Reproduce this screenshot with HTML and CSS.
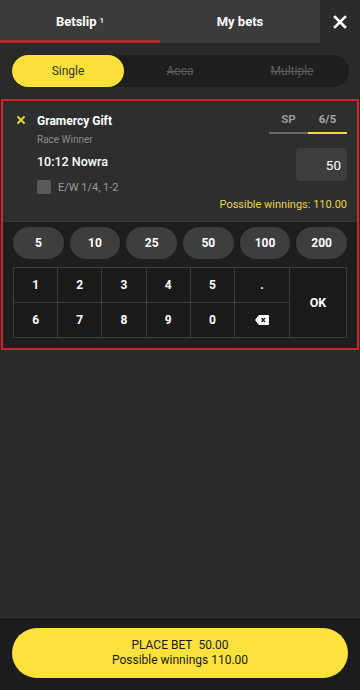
FILE: index.html
```html
<!DOCTYPE html>
<html>
<head>
<meta charset="utf-8">
<link rel="stylesheet" href="styles.css">
</head>
<body>
<div class="app">
  <div class="header">
    <div class="tab active">Betslip <sup>1</sup></div>
    <div class="tab">My bets</div>
    <div class="close">
      <svg width="14" height="14" viewBox="0 0 14 14"><path d="M2 2 L12 12 M12 2 L2 12" stroke="#fff" stroke-width="2.6" stroke-linecap="square"/></svg>
    </div>
  </div>
  <div class="seg-wrap">
    <div class="seg">
      <div class="seg-item on">Single</div>
      <div class="seg-item off">Acca</div>
      <div class="seg-item off">Multiple</div>
    </div>
  </div>
  <div class="slip">
    <div class="card">
      <div class="rem">
        <svg width="10" height="10" viewBox="0 0 10 10"><path d="M1.5 1.5 L8.5 8.5 M8.5 1.5 L1.5 8.5" stroke="#f2dc3a" stroke-width="1.8"/></svg>
      </div>
      <div class="info">
        <div class="name">Gramercy Gift</div>
        <div class="market">Race Winner</div>
        <div class="race">10:12 Nowra</div>
        <div class="ew"><span class="box"></span>E/W 1/4, 1-2</div>
      </div>
      <div class="right">
        <div class="odds">
          <div class="odd">SP</div>
          <div class="odd sel">6/5</div>
        </div>
        <div class="stake">50</div>
      </div>
      <div class="win">Possible winnings: 110.00</div>
    </div>
    <div class="pad">
      <div class="quick">
        <div class="q">5</div><div class="q">10</div><div class="q">25</div><div class="q">50</div><div class="q">100</div><div class="q">200</div>
      </div>
      <div class="keys">
        <div class="k">1</div><div class="k">2</div><div class="k">3</div><div class="k">4</div><div class="k">5</div><div class="k">.</div>
        <div class="k ok">OK</div>
        <div class="k">6</div><div class="k">7</div><div class="k">8</div><div class="k">9</div><div class="k">0</div>
        <div class="k"><svg width="14" height="10" viewBox="0 0 14 10"><path d="M4 0 H13 a1 1 0 0 1 1 1 V9 a1 1 0 0 1 -1 1 H4 L0 5 Z" fill="#fff"/><path d="M6.5 3 L10 7 M10 3 L6.5 7" stroke="#1a1a1a" stroke-width="1.3"/></svg></div>
      </div>
    </div>
  </div>
  <div class="spacer"></div>
  <div class="footer">
    <div class="place">
      <div>PLACE BET&nbsp; 50.00</div>
      <div>Possible winnings 110.00</div>
    </div>
  </div>
</div>
</body>
</html>
```
FILE: styles.css
```css
* { box-sizing: border-box; }
html, body { margin: 0; padding: 0; }
body { font-family: Roboto, "Noto Sans", sans-serif; background: #2a2a2a; color: #fff; }
.app { width: 360px; height: 690px; display: flex; flex-direction: column; background: #2a2a2a; }
.header { height: 43px; display: flex; background: #3b3b3b; }
.tab { width: 160px; display: flex; align-items: center; justify-content: center; font-size: 13px; font-weight: 700; color: #fff; border-bottom: 3px solid transparent; padding-top: 2px; }
.tab.active { border-bottom-color: #b8262f; }
.tab sup { font-size: 8px; font-weight: 500; margin-left: 3px; position: relative; top: -1px; }
.close { width: 40px; margin-left: auto; background: #2b2b2b; display: flex; align-items: center; justify-content: center; }
.seg-wrap { padding: 12px 11px 12px; }
.seg { height: 32px; background: #1e1e1e; border-radius: 16px; display: flex; padding: 0 1px; }
.seg-item { flex: 1; display: flex; align-items: center; justify-content: center; font-size: 12px; border-radius: 16px; }
.seg-item.on { background: #fbe03c; color: #333; flex: 0 0 112px; }
.seg-item.off { color: #5e5e5e; text-decoration: line-through; }
.slip { margin: 0 1px; border: 2px solid #d0212d; }
.card { background: #2e2e2e; display: grid; grid-template-columns: 34px 1fr auto; padding: 11px 10px 10px 0; }
.rem { display: flex; justify-content: center; padding-top: 3px; padding-left: 2px; }
.info { display: flex; flex-direction: column; padding-top: 2px; }
.name { font-size: 12px; font-weight: 700; color: #fff; line-height: 14px; }
.market { font-size: 10px; color: #8b8b8b; margin-top: 6px; line-height: 12px; }
.race { font-size: 12.5px; color: #fff; margin-top: 9px; line-height: 14px; font-weight: 500; }
.ew { display: flex; align-items: center; font-size: 11px; color: #9a9a9a; margin-top: 11px; }
.box { width: 14px; height: 14px; background: #5a5a5a; border-radius: 2px; margin-right: 7px; }
.right { display: flex; flex-direction: column; align-items: flex-end; }
.odds { display: flex; width: 78px; }
.odd { flex: 1; text-align: center; font-size: 11.5px; font-weight: 700; color: #9a9a9a; padding-bottom: 6px; border-bottom: 2px solid #6a6a6a; }
.odd.sel { color: #a8a8a8; border-bottom-color: #f2dc3a; }
.stake { margin-top: 14px; width: 51px; height: 33px; background: #3d3d3d; border-radius: 4px; font-size: 13.5px; display: flex; align-items: center; justify-content: flex-end; padding-right: 6px; }
.win { grid-column: 1 / 4; text-align: right; font-size: 11px; color: #ead44a; margin-top: 4px; }
.pad { background: #1e1e1e; padding: 5px 10px 10px; border-top: 1px solid #3a3a3a; }
.quick { display: grid; grid-template-columns: repeat(6, 1fr); gap: 6px; margin-bottom: 8px; }
.q { height: 32px; border-radius: 16px; background: #3e3e3e; display: flex; align-items: center; justify-content: center; font-size: 12px; font-weight: 700; }
.keys { display: grid; grid-template-columns: repeat(5, 1fr) 55px 57px; grid-template-rows: 35px 35px; border-top: 1.5px solid #3c3c3c; border-left: 1.5px solid #3c3c3c; }
.k { background: #1a1a1a; border-right: 1.5px solid #3c3c3c; border-bottom: 1.5px solid #3c3c3c; display: flex; align-items: center; justify-content: center; font-size: 12px; font-weight: 700; }
.k.ok { grid-column: 7; grid-row: 1 / 3; font-size: 12.5px; }
.spacer { flex: 1; }
.footer { height: 73px; background: #1c1c1c; border-top: 1px solid #333; padding: 10px 12px 12px; }
.place { height: 50px; background: #fde23d; border-radius: 25px; display: flex; flex-direction: column; align-items: center; justify-content: center; color: #1a1a1a; font-size: 12px; line-height: 15px; }
```
